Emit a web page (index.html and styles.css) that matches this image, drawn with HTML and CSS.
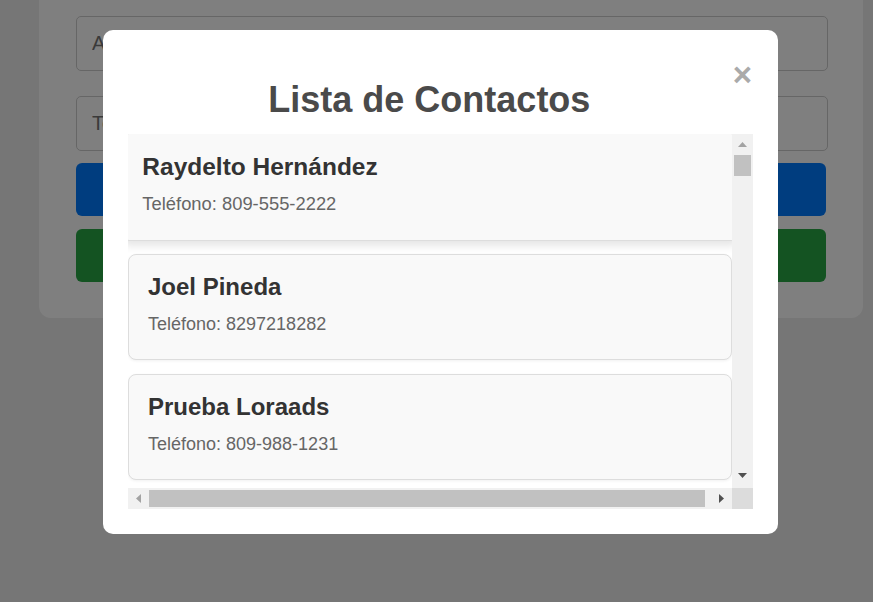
FILE: index.html
```html
<!DOCTYPE html>
<html lang="es">
<head>
<meta charset="utf-8">
<title>Contactos</title>
<link rel="stylesheet" href="styles.css">
</head>
<body>
<main class="page">
  <section class="form-card">
    <input class="field" type="text" placeholder="Apellido">
    <input class="field" type="text" placeholder="Teléfono">
    <button class="btn btn-primary" type="button">Agregar Contacto</button>
    <button class="btn btn-success" type="button">Ver Contactos</button>
  </section>
</main>

<div class="overlay">
  <div class="modal">
    <div class="modal-header">
      <h2 class="modal-title">Lista de Contactos</h2>
      <span class="close">&times;</span>
    </div>
    <div class="list-frame">
      <div class="contact-list">
        <div class="contact is-hover"><h3>Raydelto Hernández</h3><p>Teléfono: 809-555-2222</p></div>
        <div class="contact"><h3>Joel Pineda</h3><p>Teléfono: 8297218282</p></div>
        <div class="contact"><h3>Prueba Loraads</h3><p>Teléfono: 809-988-1231</p></div>
      </div>
      <div class="vscroll">
        <span class="sb-btn"><svg width="9" height="5" viewBox="0 0 9 5"><polygon points="4.5,0 9,5 0,5" fill="#a3a3a3"/></svg></span>
        <span class="sb-thumb-v"></span>
        <span class="sb-fill"></span>
        <span class="sb-btn sb-btn-down"><svg width="9" height="5" viewBox="0 0 9 5"><polygon points="0,0 9,0 4.5,5" fill="#505050"/></svg></span>
      </div>
      <div class="hscroll">
        <span class="sb-btn"><svg width="5" height="9" viewBox="0 0 5 9"><polygon points="5,0 5,9 0,4.5" fill="#a3a3a3"/></svg></span>
        <span class="sb-thumb-h"></span>
        <span class="sb-btn"><svg width="5" height="9" viewBox="0 0 5 9"><polygon points="0,0 5,4.5 0,9" fill="#505050"/></svg></span>
      </div>
      <div class="sb-corner"></div>
    </div>
  </div>
</div>
</body>
</html>
```

FILE: styles.css
```css
* {
  box-sizing: border-box;
}

html, body {
  margin: 0;
  height: 100%;
}

body {
  background: #ececec;
  font-family: "Liberation Sans", Arial, sans-serif;
  overflow: hidden;
}

.page {
  padding: 0 10px 0 39px;
}

.form-card {
  background: #ffffff;
  border-radius: 0 0 12px 12px;
  padding: 16px 37px 36px;
  display: flex;
  flex-direction: column;
}

.field {
  width: calc(100% + 2px);
  height: 55px;
  padding: 0 15px;
  border: 1px solid #cccccc;
  border-radius: 5px;
  font-family: inherit;
  font-size: 20px;
  color: #333;
  background: #fff;
  margin-bottom: 25px;
}

.field + .field {
  margin-bottom: 12px;
}

.field::placeholder {
  color: #757575;
}

.btn {
  height: 53px;
  border: none;
  border-radius: 6px;
  color: #fff;
  font-family: inherit;
  font-size: 18px;
  font-weight: bold;
}

.btn-primary {
  background: #007bff;
  margin-bottom: 13px;
}

.btn-success {
  background: #28a745;
}

.overlay {
  position: fixed;
  inset: 0;
  background: rgba(0, 0, 0, 0.5);
  display: flex;
  justify-content: center;
  align-items: flex-start;
  padding: 30px 0 0 8px;
}

.modal {
  width: 675px;
  background: #fff;
  border-radius: 10px;
  padding: 25px;
}

.modal-header {
  display: flex;
  align-items: flex-start;
}

.modal-title {
  flex: 1;
  margin: 23px 0 13px;
  text-align: center;
  font-size: 36px;
  line-height: 1.2;
  font-weight: bold;
  color: #4a4a4a;
}

.close {
  color: #aaaaaa;
  font-size: 33px;
  font-weight: bold;
  line-height: 1;
  margin: 3px 1px 0 2px;
  cursor: pointer;
}

/* list with its scrollbars */
.list-frame {
  display: grid;
  grid-template-columns: 1fr 21px;
  grid-template-rows: 354px 21px;
  background: #fff;
}

.contact-list {
  overflow: hidden;
  min-width: 0;
}

.vscroll {
  display: flex;
  flex-direction: column;
  background: #f1f1f1;
}

.hscroll {
  display: flex;
  align-items: center;
  background: #f1f1f1;
}

.sb-btn {
  flex: none;
  width: 21px;
  height: 21px;
  display: flex;
  align-items: center;
  justify-content: center;
}

.sb-btn svg {
  display: block;
}

.sb-btn-down {
  padding-bottom: 4px;
}

.sb-thumb-v {
  flex: none;
  height: 21px;
  margin: 0 2px;
  background: #c1c1c1;
}

.sb-fill {
  flex: 1;
}

.sb-thumb-h {
  flex: 1;
  height: 17px;
  margin-right: 6px;
  background: #c1c1c1;
}

.sb-corner {
  background: #dcdcdc;
}

.contact {
  background: #f9f9f9;
  border: 1px solid #dddddd;
  border-radius: 8px;
  padding: 18px 19px 24px;
  margin-bottom: 14px;
  box-shadow: 0 1px 3px rgba(0, 0, 0, 0.06);
}

.contact h3 {
  margin: 0 0 13px;
  font-size: 24px;
  line-height: 28px;
  color: #333333;
}

.contact p {
  margin: 0;
  font-size: 18px;
  line-height: 21px;
  color: #666666;
}

.contact.is-hover {
  transform: scale(1.02);
  box-shadow: 0 4px 8px rgba(0, 0, 0, 0.1);
}
```
